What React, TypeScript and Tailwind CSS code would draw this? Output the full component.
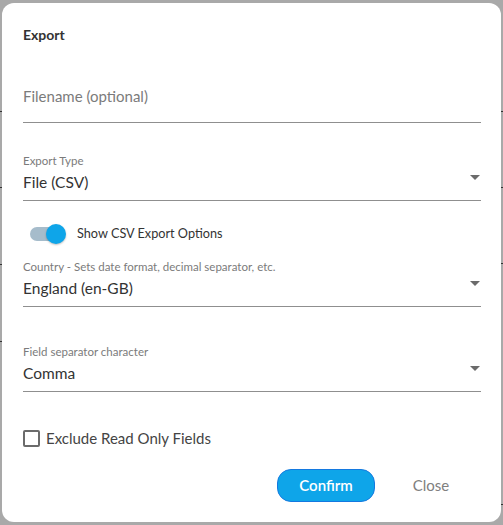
import { useState } from 'react'

const font = { fontFamily: 'Lato, "Noto Sans", sans-serif' }

const Arrow = () => (
  <svg width="10" height="5" viewBox="0 0 10 5" className="absolute right-[1px] top-[5px]">
    <path d="M0 0 L10 0 L5 5 Z" fill="#6b6b6b" />
  </svg>
)

const SelectField = ({ label, value, className }: { label: string; value: string; className?: string }) => (
  <div className={`relative border-b border-[#8f8f8f] pb-[6px] ${className ?? ''}`}>
    <div className="text-[11.5px] leading-[14px] text-[#7b7b7b]">{label}</div>
    <div className="relative mt-[2px] h-[24px] text-[15.5px] leading-[24px] text-[#333]">
      {value}
      <Arrow />
    </div>
  </div>
)

const Tick = ({ side, top }: { side: 'l' | 'r'; top: string }) => (
  <div className={`absolute h-px w-[3px] bg-[#333] ${side === 'l' ? 'left-0' : 'right-0'} ${top}`} />
)

const App = () => {
  const [showCsv, setShowCsv] = useState(true)
  const [exclude, setExclude] = useState(false)

  return (
    <div className="relative h-[525px] w-[503px] bg-[#a9a9a9] pl-[2px] pt-[3px]" style={font}>
      <Tick side="l" top="top-[111px]" />
      <Tick side="l" top="top-[187px]" />
      <Tick side="l" top="top-[264px]" />
      <Tick side="l" top="top-[341px]" />
      <Tick side="r" top="top-[111px]" />
      <Tick side="r" top="top-[187px]" />
      <Tick side="r" top="top-[263px]" />
      <Tick side="r" top="top-[504px]" />

      <div className="relative flex h-[519px] w-[499px] flex-col rounded-[12px] bg-white pl-[21px] pr-[20px] pt-[22px]">
        <div className="h-[20px] text-[14px] font-bold leading-[20px] text-[#333]">Export</div>

        <div className="mt-[39px] border-b border-[#8f8f8f] pb-[14px]">
          <input
            placeholder="Filename (optional)"
            className="block h-[24px] w-full text-[15px] leading-[24px] text-[#333] outline-none placeholder:text-[#7b7b7b]"
          />
        </div>

        <SelectField label="Export Type" value="File (CSV)" className="mt-[31px]" />

        <div className="mt-[21px] flex h-[24px] items-center">
          <button onClick={() => setShowCsv(!showCsv)} className="relative ml-[7px] h-[24px] w-[36px]">
            <span className="absolute left-0 top-[5px] h-[14px] w-[32px] rounded-full bg-[#a6bccb]" />
            <span
              className={`absolute top-[2px] h-[20px] w-[20px] rounded-full bg-[#0ea5e9] shadow-[0_1px_2px_rgba(0,0,0,0.25)] ${showCsv ? 'left-[16px]' : 'left-0'}`}
            />
          </button>
          <span className="ml-[11px] text-[12.7px] text-[#333]">Show CSV Export Options</span>
        </div>

        <SelectField label="Country - Sets date format, decimal separator, etc." value="England (en-GB)" className="mt-[14px]" />

        <SelectField label="Field separator character" value="Comma" className="mt-[38px]" />

        <div className="mt-[34px] flex h-[24px] items-center">
          <button
            onClick={() => setExclude(!exclude)}
            className="h-[17px] w-[17px] rounded-[2px] border-2 border-[#6b6b6b] bg-white"
          />
          <span className="ml-[6px] text-[15px] text-[#444]">Exclude Read Only Fields</span>
        </div>

        <div className="mt-[19px] flex items-center justify-end pr-[16px]">
          <button className="h-[33px] w-[98px] rounded-[14px] border border-[#1479e0] bg-[#0ea5e9] text-[15px] font-semibold text-white">
            Confirm
          </button>
          <button className="ml-[22px] h-[33px] w-[68px] text-[15px] text-[#808080]">Close</button>
        </div>
      </div>
    </div>
  )
}

export default App
